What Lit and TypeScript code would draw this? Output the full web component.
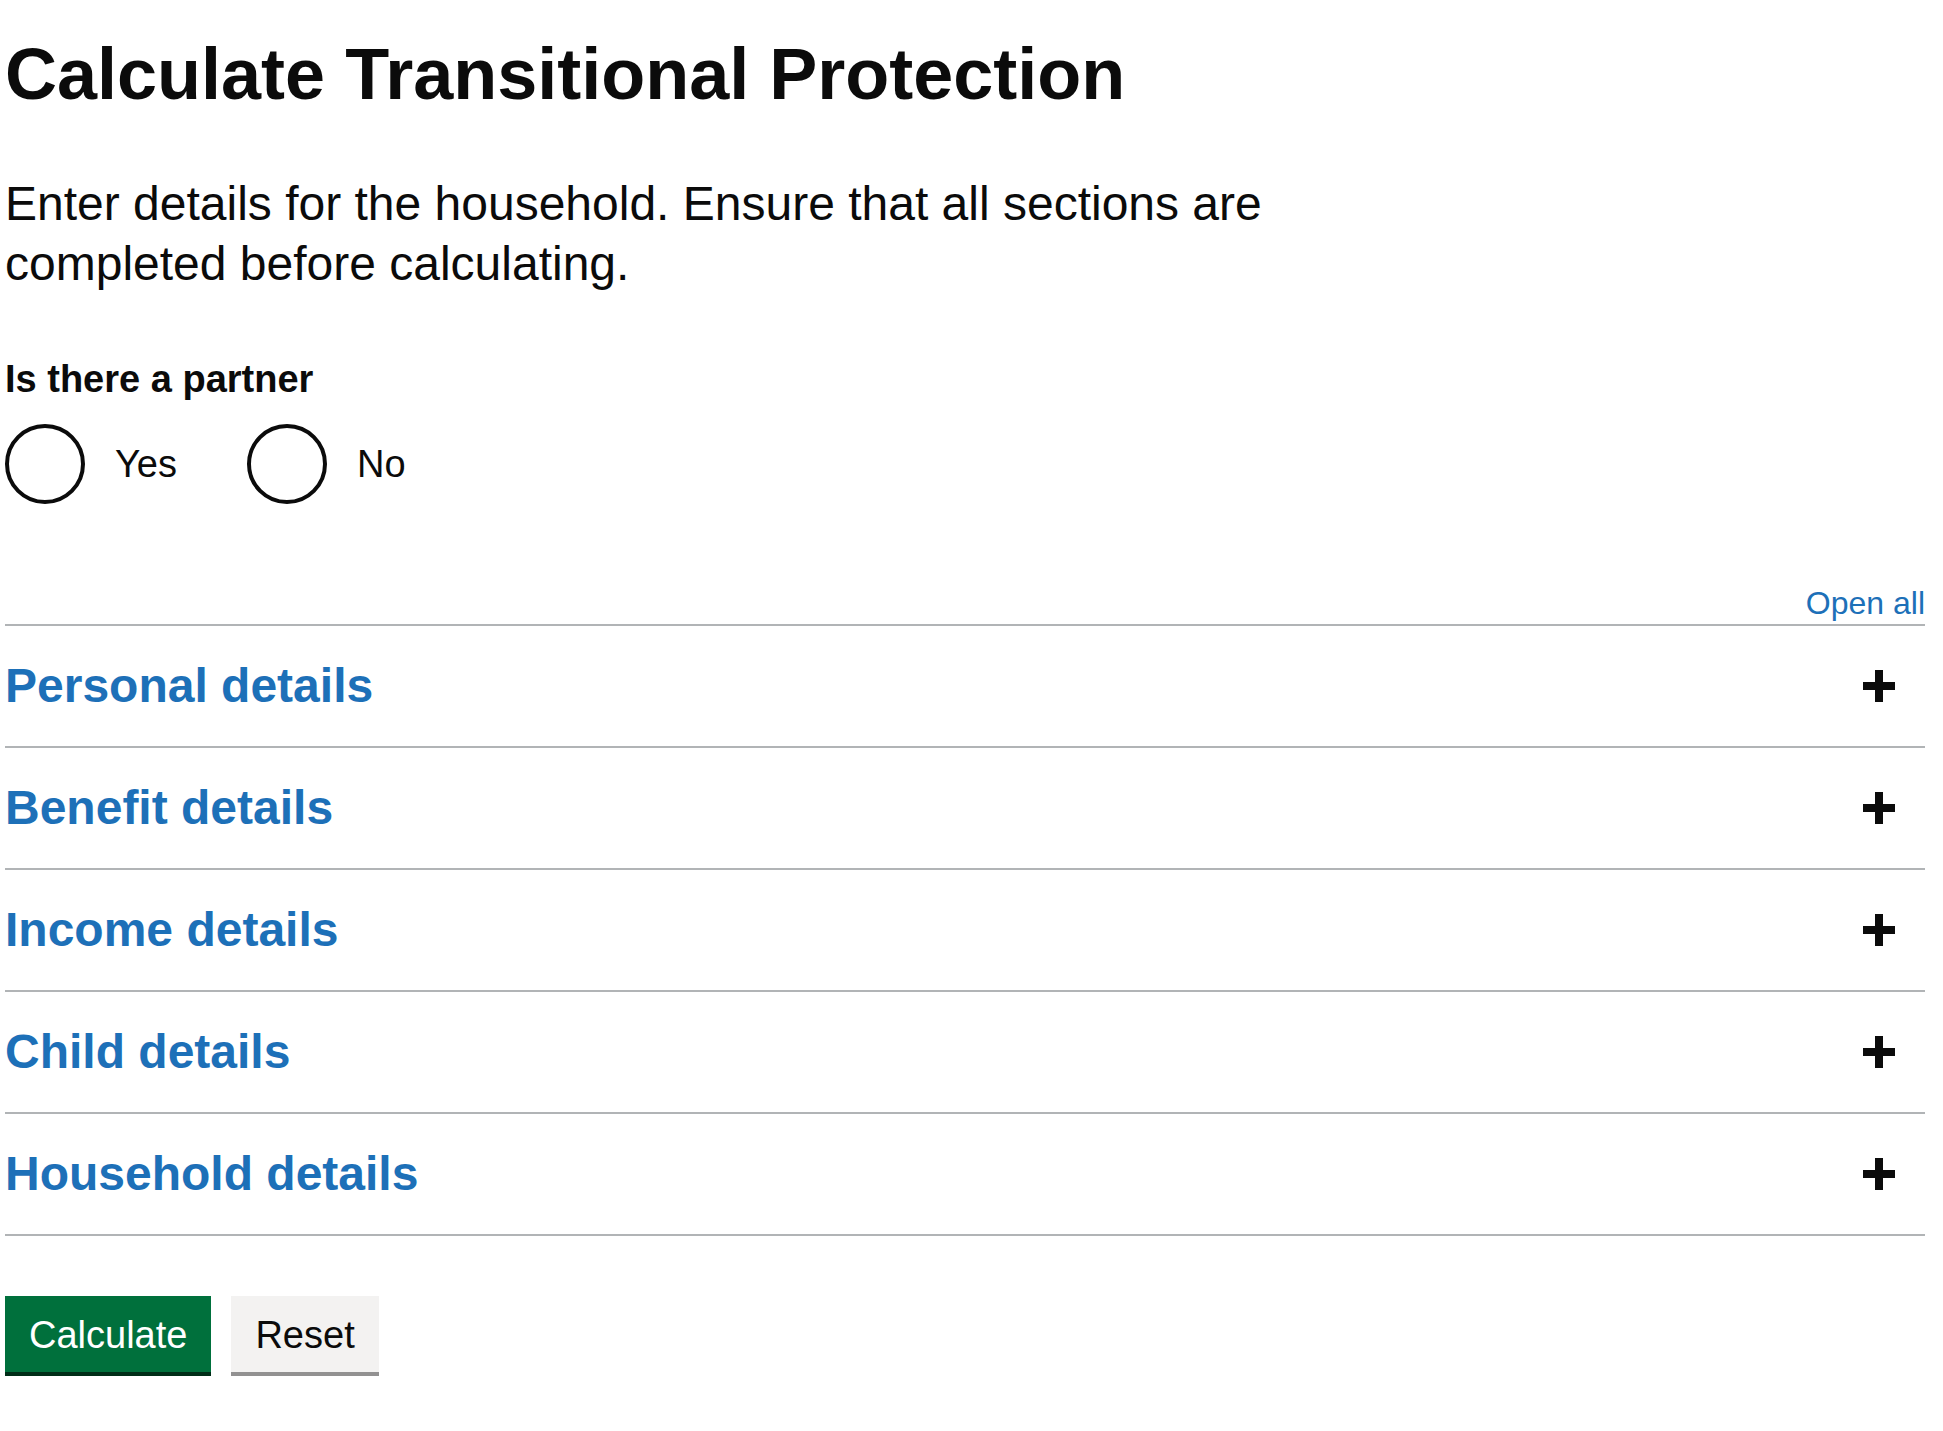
import { LitElement, html, css, svg } from "lit";
import { customElement, property, state } from "lit/decorators.js";

const SECTIONS = [
  "Personal details",
  "Benefit details",
  "Income details",
  "Child details",
  "Household details",
];

@customElement("accordion-section")
class AccordionSection extends LitElement {
  @property() heading = "";
  @property({ type: Boolean }) open = false;

  static styles = css`
    :host {
      display: block;
      border-bottom: 2px solid #b1b4b6;
    }
    .heading {
      margin: 0;
    }
    .toggle {
      display: flex;
      align-items: center;
      justify-content: space-between;
      box-sizing: border-box;
      width: 100%;
      margin: 0;
      padding: 30px 30px 30px 0;
      border: 0;
      background: none;
      color: #1d70b8;
      font: inherit;
      font-size: 48px;
      font-weight: 700;
      line-height: 60px;
      text-align: left;
      cursor: pointer;
    }
    .icon {
      display: block;
      flex: none;
      width: 32px;
      height: 32px;
      fill: #0b0b0b;
    }
  `;

  private toggle() {
    this.dispatchEvent(new CustomEvent("section-toggle"));
  }

  render() {
    return html`
      <h2 class="heading">
        <button class="toggle" type="button" aria-expanded=${this.open} @click=${this.toggle}>
          <span>${this.heading}</span>
          <svg class="icon" viewBox="0 0 32 32" aria-hidden="true">
            <rect x="0" y="12" width="32" height="8"></rect>
            ${this.open ? "" : svg`<rect x="12" y="0" width="8" height="32"></rect>`}
          </svg>
        </button>
      </h2>
    `;
  }
}

@customElement("app-root")
class AppRoot extends LitElement {
  @state() private opened: boolean[] = SECTIONS.map(() => false);

  static styles = css`
    :host {
      display: block;
      padding: 34px 18px 54px 5px;
      background: #fff;
      color: #0b0b0b;
      font-family: "Liberation Sans", Arial, sans-serif;
    }
    .title {
      margin: 0 0 60px;
      font-size: 72px;
      font-weight: 700;
      line-height: 80px;
    }
    .lead {
      max-width: 66.66%;
      margin: 0 0 60px;
      font-size: 48px;
      line-height: 60px;
    }
    .partner {
      min-width: 0;
      margin: 0 0 80px;
      padding: 0;
      border: 0;
    }
    .legend {
      margin: 0 0 20px;
      padding: 0;
      font-size: 38px;
      font-weight: 700;
      line-height: 50px;
    }
    .radios {
      display: flex;
      flex-wrap: wrap;
      gap: 20px 40px;
    }
    .option {
      display: flex;
      align-items: center;
    }
    .radio {
      appearance: none;
      box-sizing: border-box;
      width: 80px;
      height: 80px;
      margin: 0;
      border: 4px solid #0b0b0b;
      border-radius: 50%;
      background: #fff;
      cursor: pointer;
    }
    .radio:checked {
      background: radial-gradient(#0b0b0b 20px, #fff 21px);
    }
    .radio:focus-visible {
      outline: 6px solid #ffdd00;
    }
    .label {
      padding: 0 30px;
      font-size: 38px;
      line-height: 50px;
      cursor: pointer;
    }
    .controls {
      display: flex;
      justify-content: flex-end;
      border-bottom: 2px solid #b1b4b6;
    }
    .open-all {
      margin: 0;
      padding: 0 0 2px;
      border: 0;
      background: none;
      color: #1d70b8;
      font: inherit;
      font-size: 32px;
      line-height: 38px;
      cursor: pointer;
    }
    .actions {
      display: flex;
      flex-wrap: wrap;
      gap: 20px;
      margin-top: 60px;
    }
    .button {
      margin: 0;
      padding: 20px 24px 18px;
      border: 0;
      background: #00703c;
      box-shadow: 0 4px 0 #002d18;
      color: #fff;
      font: inherit;
      font-size: 38px;
      line-height: 38px;
      cursor: pointer;
    }
    .secondary {
      background: #f3f2f1;
      box-shadow: 0 4px 0 #929191;
      color: #0b0b0b;
    }
  `;

  private toggleAll() {
    const next = !this.opened.every(Boolean);
    this.opened = this.opened.map(() => next);
  }

  private toggleOne(index: number) {
    this.opened = this.opened.map((value, i) => (i === index ? !value : value));
  }

  render() {
    return html`
      <main>
        <h1 class="title">Calculate Transitional Protection</h1>
        <p class="lead">
          Enter details for the household. Ensure that all sections are completed before calculating.
        </p>
        <form @submit=${(e: Event) => e.preventDefault()}>
          <fieldset class="partner">
            <legend class="legend">Is there a partner</legend>
            <div class="radios">
              <div class="option">
                <input class="radio" type="radio" id="partner-yes" name="partner" value="yes" />
                <label class="label" for="partner-yes">Yes</label>
              </div>
              <div class="option">
                <input class="radio" type="radio" id="partner-no" name="partner" value="no" />
                <label class="label" for="partner-no">No</label>
              </div>
            </div>
          </fieldset>
          <div class="controls">
            <button class="open-all" type="button" @click=${this.toggleAll}>
              ${this.opened.every(Boolean) ? "Close all" : "Open all"}
            </button>
          </div>
          ${SECTIONS.map(
            (heading, i) => html`
              <accordion-section
                .heading=${heading}
                .open=${this.opened[i]}
                @section-toggle=${() => this.toggleOne(i)}
              ></accordion-section>
            `,
          )}
          <div class="actions">
            <button class="button" type="submit">Calculate</button>
            <button class="button secondary" type="reset">Reset</button>
          </div>
        </form>
      </main>
    `;
  }
}
